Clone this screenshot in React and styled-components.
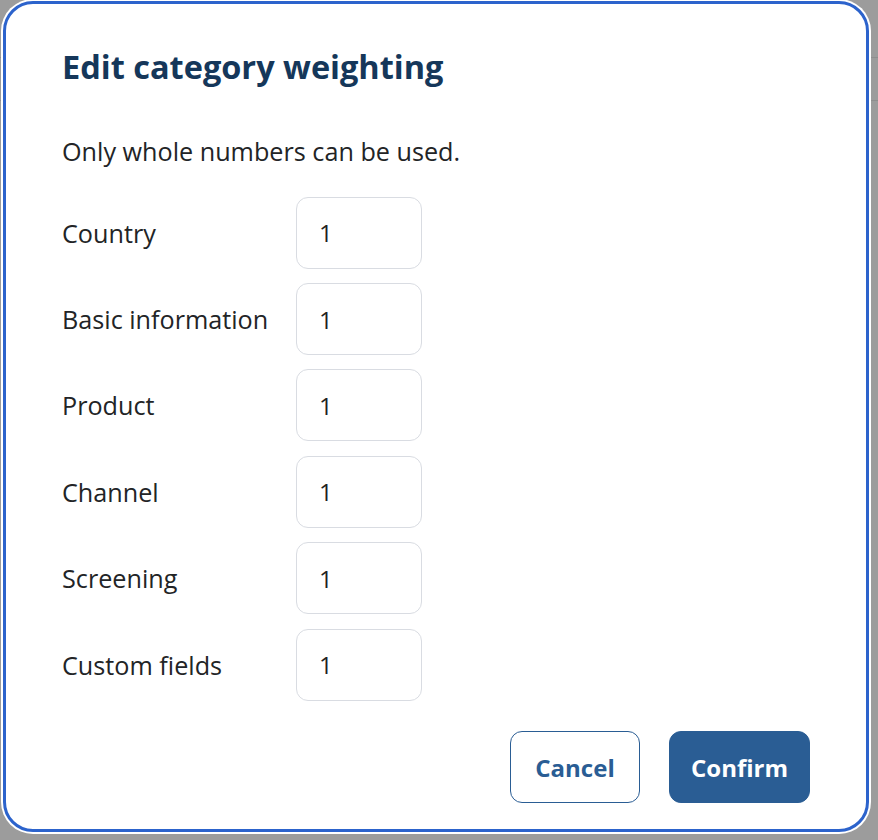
import React from "react";
import styled, { createGlobalStyle } from "styled-components";

const Global = createGlobalStyle`
  html, body {
    margin: 0;
    padding: 0;
    background: #9c9c9c;
    font-family: "Open Sans", "Noto Sans", sans-serif;
  }
  * { box-sizing: border-box; }
`;

const Backdrop = styled.div`
  width: 878px;
  height: 840px;
  padding: 1px 0 0 3px;
  overflow: hidden;
  background:
    linear-gradient(#8e8e8e, #8e8e8e) 0 57px / 100% 1px no-repeat,
    linear-gradient(#8e8e8e, #8e8e8e) 0 100px / 100% 1px no-repeat,
    #9c9c9c;
`;

const Dialog = styled.div`
  width: 866px;
  height: 831px;
  background: #fff;
  border: 3px solid #2c63cc;
  border-radius: 30px;
  box-shadow: 0 0 0 2px #fff;
  padding: 47px 56px 26px 56px;
  display: flex;
  flex-direction: column;
`;

const Title = styled.h2`
  margin: 0;
  font-size: 32.5px;
  line-height: 1;
  font-weight: 700;
  color: #15375a;
`;

const Hint = styled.p`
  margin: 55.5px 0 0;
  font-size: 25.2px;
  line-height: 1;
  color: #222426;
`;

const Fields = styled.div`
  margin-top: 32.5px;
  display: grid;
  grid-template-columns: 234px 126px;
  row-gap: 14.4px;
  align-items: center;
`;

const Label = styled.label`
  font-size: 25.2px;
  color: #222426;
`;

const NumberInput = styled.input`
  width: 126px;
  height: 72px;
  border: 1px solid #d9dce2;
  border-radius: 12px;
  padding: 0 0 0 22px;
  font-family: inherit;
  font-size: 24px;
  color: #1f2123;
  background: #fff;
  outline: none;
`;

const Actions = styled.div`
  margin-top: auto;
  display: flex;
  justify-content: flex-end;
  gap: 29px;
`;

const Button = styled.button`
  width: ${(p) => (p.$primary ? "141px" : "130px")};
  height: 72px;
  padding: 0;
  border-radius: 12px;
  border: 1px solid #2a5d94;
  background: ${(p) => (p.$primary ? "#2a5d94" : "#fff")};
  color: ${(p) => (p.$primary ? "#fff" : "#2a5d94")};
  font-family: inherit;
  font-size: 24px;
  font-weight: 700;
  cursor: pointer;
`;

const categories = [
  "Country",
  "Basic information",
  "Product",
  "Channel",
  "Screening",
  "Custom fields",
];

export default function App() {
  return (
    <>
      <Global />
      <Backdrop>
        <Dialog role="dialog" aria-labelledby="weighting-title">
          <Title id="weighting-title">Edit category weighting</Title>
          <Hint>Only whole numbers can be used.</Hint>
          <Fields>
            {categories.map((name, i) => (
              <React.Fragment key={name}>
                <Label htmlFor={`w-${i}`}>{name}</Label>
                <NumberInput id={`w-${i}`} defaultValue="1" inputMode="numeric" />
              </React.Fragment>
            ))}
          </Fields>
          <Actions>
            <Button>Cancel</Button>
            <Button $primary>Confirm</Button>
          </Actions>
        </Dialog>
      </Backdrop>
    </>
  );
}
